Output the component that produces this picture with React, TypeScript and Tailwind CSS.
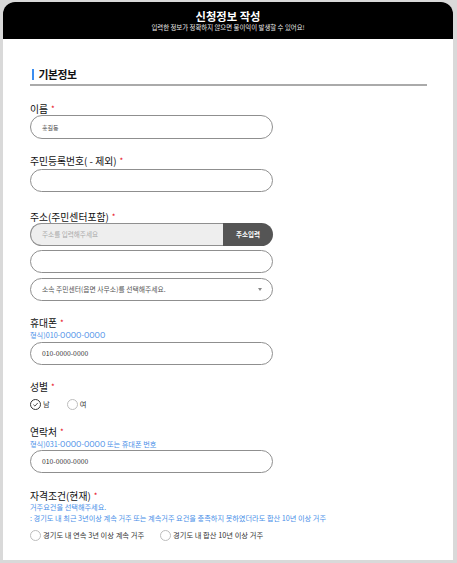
import React from "react";

const F = { fontFamily: '"Noto Sans CJK KR", "Noto Sans", sans-serif' } as const;

function Label({ text, className = "" }: { text: string; className?: string }) {
  return (
    <div className={"flex items-center h-[12px] leading-[12px] text-[9.8px] text-[#111] " + className}>
      <span>{text}</span>
      <span className="ml-[3px] text-[8px] leading-[7px] text-[#e60012] -mt-[1px]">*</span>
    </div>
  );
}

function Hint({ text, className = "" }: { text: string; className?: string }) {
  return <div className={"h-[11px] leading-[11px] text-[7.2px] text-[#4a8fe8] whitespace-nowrap " + className}>{text}</div>;
}

function Input({ value, className = "", textClass = "text-[6.8px] text-[#333]" }: { value?: string; className?: string; textClass?: string }) {
  return (
    <div className={"w-[243px] h-[23px] rounded-full border border-[#8f8f8f] bg-white flex items-center pl-[11px] " + className}>
      <span className={textClass}>{value}</span>
    </div>
  );
}

function Radio({ checked, label, className = "" }: { checked?: boolean; label: string; className?: string }) {
  return (
    <div className={"flex items-center h-[12px] " + className}>
      <span
        className={
          "w-[11px] h-[11px] rounded-full border flex items-center justify-center bg-white " +
          (checked ? "border-[#333]" : "border-[#bdbdbd]")
        }
      >
        {checked && (
          <svg width="7" height="7" viewBox="0 0 10 10">
            <path d="M2 5.2 L4.2 7.3 L8.2 2.8" fill="none" stroke="#333" strokeWidth="1.2" />
          </svg>
        )}
      </span>
      <span className="ml-[2px] text-[7.3px] text-[#333] whitespace-nowrap">{label}</span>
    </div>
  );
}

export default function App() {
  return (
    <div style={F} className="w-[457px] h-[563px] bg-[#d9d9d9] pt-[2px] pl-[3px] pr-[4px] pb-[3px]">
      <div className="h-full bg-white rounded-t-[12px] overflow-hidden">
        <div className="h-[37px] bg-black flex flex-col items-center pt-[7px]">
          <div className="h-[14px] leading-[14px] text-[11.3px] font-bold text-white">신청정보 작성</div>
          <div className="h-[10px] leading-[10px] text-[6.4px] text-[#e8e8e8]">
            입력한 정보가 정확하지 않으면 불이익이 발생할 수 있어요!
          </div>
        </div>

        <div className="pl-[27px] pr-[23px]">
          <div className="mt-[27px] w-[397px] h-[20px] border-b-2 border-[#aaaaaa] flex items-start">
            <div className="h-[16px] flex items-center">
              <span className="w-[2px] h-[11px] bg-[#3d8ef0] ml-[1.5px]"></span>
              <span className="ml-[5px] text-[10.8px] leading-[16px] font-bold text-[#111] tracking-[-0.4px]">기본정보</span>
            </div>
          </div>

          <Label text="이름" className="mt-[17px]" />
          <Input value="홍길동" className="h-[24px]" textClass="text-[6px] text-[#444]" />

          <Label text="주민등록번호( - 제외)" className="mt-[16px]" />
          <Input className="mt-[2px]" />

          <Label text="주소(주민센터포함)" className="mt-[19px]" />
          <div className="w-[243px] h-[23px] flex">
            <div className="flex-1 h-full rounded-l-full border border-r-0 border-[#8f8f8f] bg-[#eeeeee] flex items-center pl-[11px]">
              <span className="text-[6.6px] text-[#a9a9a9]">주소를 입력해주세요</span>
            </div>
            <div className="w-[50px] h-full rounded-r-full bg-[#555555] flex items-center justify-center">
              <span className="text-[6.5px] font-bold text-white">주소입력</span>
            </div>
          </div>
          <Input className="mt-[4px]" />
          <div className="mt-[5px] w-[243px] h-[23px] rounded-full border border-[#8f8f8f] bg-white flex items-center justify-between pl-[11px] pr-[10px]">
            <span className="text-[6.8px] text-[#555]">소속 주민센터(읍면 사무소)를 선택해주세요.</span>
            <svg width="4" height="3" viewBox="0 0 4 3">
              <path d="M0 0 L4 0 L2 3 Z" fill="#888" />
            </svg>
          </div>

          <Label text="휴대폰" className="mt-[16px]" />
          <Hint text="형식)010-OOOO-OOOO" className="mt-[1px]" />
          <Input value="010-0000-0000" className="mt-[1px]" />

          <Label text="성별" className="mt-[16px]" />
          <div className="mt-[5px] flex">
            <Radio checked label="남" />
            <Radio label="여" className="ml-[17px]" />
          </div>

          <Label text="연락처" className="mt-[16px]" />
          <Hint text="형식)031-OOOO-OOOO 또는 휴대폰 번호" className="mt-[1px]" />
          <Input value="010-0000-0000" />

          <Label text="자격조건(현재)" className="mt-[17px]" />
          <Hint text="거주요건을 선택해주세요." />
          <Hint text=": 경기도 내 최근 3년이상 계속 거주 또는 계속거주 요건을 충족하지 못하였더라도 합산 10년 이상 거주" />
          <div className="mt-[5px] flex">
            <Radio label="경기도 내 연속 3년 이상 계속 거주" className="w-[130px]" />
            <Radio label="경기도 내 합산 10년 이상 거주" />
          </div>
        </div>
      </div>
    </div>
  );
}
